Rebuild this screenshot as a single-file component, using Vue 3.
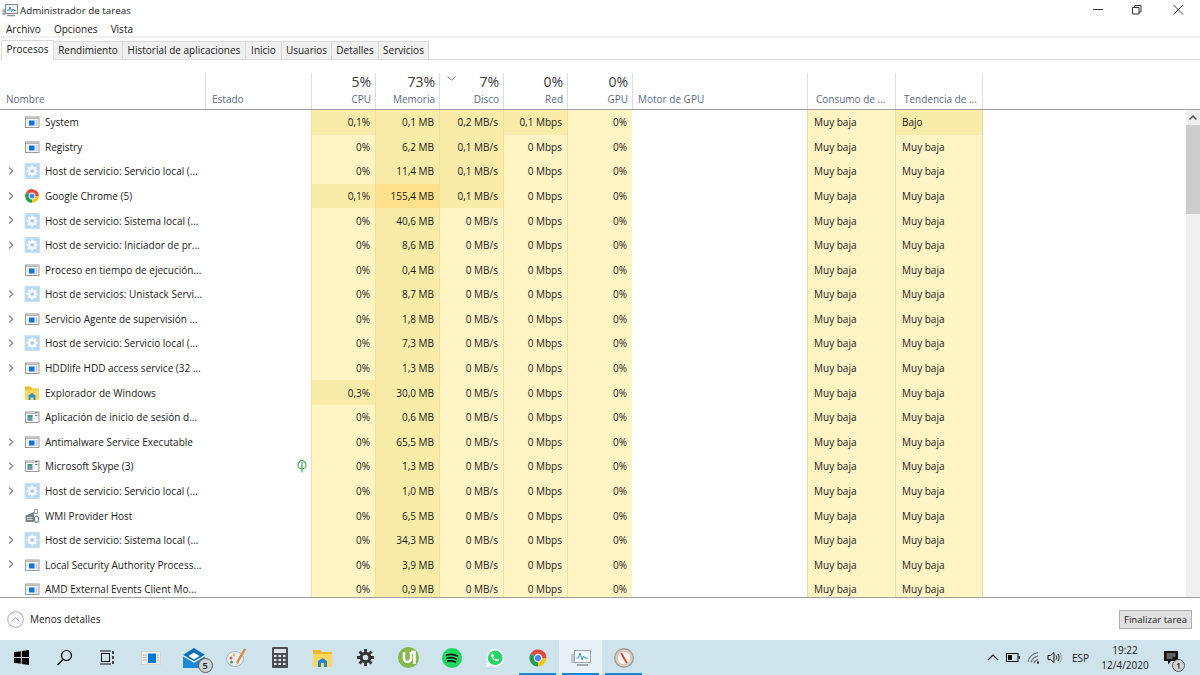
<script setup>
const tabs = [
  { label: 'Procesos', w: 53 },
  { label: 'Rendimiento', w: 69 },
  { label: 'Historial de aplicaciones', w: 123 },
  { label: 'Inicio', w: 36 },
  { label: 'Usuarios', w: 50 },
  { label: 'Detalles', w: 47 },
  { label: 'Servicios', w: 50 }
]

const H = 'Host de servicio: '
const rows = [
  ['System', 'win', 0, '0,1%', '0,1 MB', '0,2 MB/s', '0,1 Mbps'],
  ['Registry', 'win', 0, '0%', '6,2 MB', '0,1 MB/s', '0 Mbps'],
  [H + 'Servicio local (...', 'gear', 1, '0%', '11,4 MB', '0,1 MB/s', '0 Mbps'],
  ['Google Chrome (5)', 'chrome', 1, '0,1%', '155,4 MB', '0,1 MB/s', '0 Mbps'],
  [H + 'Sistema local (...', 'gear', 1, '0%', '40,6 MB', '0 MB/s', '0 Mbps'],
  [H + 'Iniciador de pr...', 'gear', 1, '0%', '8,6 MB', '0 MB/s', '0 Mbps'],
  ['Proceso en tiempo de ejecución...', 'win', 0, '0%', '0,4 MB', '0 MB/s', '0 Mbps'],
  ['Host de servicios: Unistack Servi...', 'gear', 1, '0%', '8,7 MB', '0 MB/s', '0 Mbps'],
  ['Servicio Agente de supervisión ...', 'win', 1, '0%', '1,8 MB', '0 MB/s', '0 Mbps'],
  [H + 'Servicio local (...', 'gear', 1, '0%', '7,3 MB', '0 MB/s', '0 Mbps'],
  ['HDDlife HDD access service (32 ...', 'win', 1, '0%', '1,3 MB', '0 MB/s', '0 Mbps'],
  ['Explorador de Windows', 'folder', 0, '0,3%', '30,0 MB', '0 MB/s', '0 Mbps'],
  ['Aplicación de inicio de sesión d...', 'app', 0, '0%', '0,6 MB', '0 MB/s', '0 Mbps'],
  ['Antimalware Service Executable', 'win', 1, '0%', '65,5 MB', '0 MB/s', '0 Mbps'],
  ['Microsoft Skype (3)', 'app', 1, '0%', '1,3 MB', '0 MB/s', '0 Mbps'],
  [H + 'Servicio local (...', 'gear', 1, '0%', '1,0 MB', '0 MB/s', '0 Mbps'],
  ['WMI Provider Host', 'wmi', 0, '0%', '6,5 MB', '0 MB/s', '0 Mbps'],
  [H + 'Sistema local (...', 'gear', 1, '0%', '34,3 MB', '0 MB/s', '0 Mbps'],
  ['Local Security Authority Process...', 'win', 1, '0%', '3,9 MB', '0 MB/s', '0 Mbps'],
  ['AMD External Events Client Mo...', 'win', 0, '0%', '0,9 MB', '0 MB/s', '0 Mbps']
].map(([name, icon, chev, cpu, mem, disk, net], i) => ({
  id: i, name, icon, chev, cpu, mem, disk, net,
  cpuHeat: cpu === '0%' ? 'h0' : 'h1',
  memHeat: parseFloat(mem) === 155 ? 'h2' : 'h1',
  diskHeat: disk === '0 MB/s' ? 'h0' : 'h1',
  netHeat: net === '0 Mbps' ? 'h0' : 'h1',
  trend: i === 0 ? 'Bajo' : 'Muy baja',
  trendHeat: i === 0 ? 'h1' : 'h0',
  leaf: name.startsWith('Microsoft Skype')
}))

const heads = [
  { pct: '', label: 'Estado', cls: 'left estado' },
  { pct: '5%', label: 'CPU' },
  { pct: '73%', label: 'Memoria' },
  { pct: '7%', label: 'Disco', sort: true },
  { pct: '0%', label: 'Red' },
  { pct: '0%', label: 'GPU' },
  { pct: '', label: 'Motor de GPU', cls: 'left motor' },
  { pct: '', label: 'Consumo de ...', cls: 'left power' },
  { pct: '', label: 'Tendencia de ...', cls: 'left power' }
]
</script>

<template>
  <div class="screen">
    <svg class="defs" width="0" height="0">
      <symbol id="i-win" viewBox="0 0 16 16">
        <rect x="1.500" y="3" width="13.500" height="10.500" fill="#f6f6f6" stroke="#9b9b9b"/>
        <rect x="2" y="3.500" width="12.500" height="1.500" fill="#b9b9b9"/>
        <rect x="5" y="6.500" width="5.500" height="5" fill="#0c74dc"/>
        <path d="M11.500 7h2M11.500 9h2M11.500 11h2" stroke="#a3adb6"/>
        <path d="M3 7h1M3 9h1" stroke="#cfd5da"/>
      </symbol>
      <symbol id="i-app" viewBox="0 0 16 16">
        <rect x="1.500" y="3" width="13.500" height="10.500" fill="#f6f6f6" stroke="#9b9b9b"/>
        <rect x="2" y="3.500" width="12.500" height="1.500" fill="#c4c4c4"/>
        <rect x="3.500" y="6" width="5" height="2.800" fill="#3d9a78"/>
        <rect x="3.500" y="8.800" width="5" height="3" fill="#6d90ab"/>
        <path d="M11 3.500h2.500M11 6.500h2.500" stroke="#777"/>
      </symbol>
      <symbol id="i-gear" viewBox="0 0 16 16">
        <rect x="1" y="0.500" width="14.500" height="15" fill="#b9d9f3" stroke="#c9e1f5"/>
        <circle cx="8.200" cy="8" r="3.100" fill="none" stroke="#fff" stroke-width="2.200"/>
        <path d="M8.200 2.400v2.200M8.200 11.400v2.200M2.600 8h2.200M11.600 8h2.200M4.300 4.100l1.500 1.500M10.600 10.400l1.500 1.500M12.100 4.100l-1.500 1.500M5.800 10.400l-1.500 1.500" stroke="#fff" stroke-width="2"/>
        <circle cx="8.200" cy="8" r="1.200" fill="#a3c9ea"/>
      </symbol>
      <symbol id="i-chrome" viewBox="0 0 16 16">
        <path d="M8 8 2.100 4.600A6.800 6.800 0 0 1 14.800 8Z" fill="#dd4b3e"/>
        <path d="M8 8 14.800 8A6.800 6.800 0 0 1 8 14.800Z" fill="#f5c518"/>
        <path d="M8 8 8 14.800A6.800 6.800 0 0 1 2.100 4.600Z" fill="#1e9e55"/>
        <circle cx="8" cy="8" r="3.400" fill="#fff"/>
        <circle cx="8" cy="8" r="2.500" fill="#4a86e8"/>
      </symbol>
      <symbol id="i-folder" viewBox="0 0 16 16">
        <path d="M1 1.500h5.500L8 3.500h7v11H1Z" fill="#eeb52f"/>
        <rect x="1" y="4.500" width="14" height="10" fill="#fbd75b"/>
        <path d="M4.500 15V10.500L8 8l3.500 2.500V15H9.500v-2.500h-3V15Z" fill="#2b8fd8"/>
      </symbol>
      <symbol id="i-wmi" viewBox="0 0 16 16">
        <path d="M1.500 7.500 10 4v10H1.500Z" fill="#7b8289"/>
        <path d="M3 9.500h5.500M3 11.500h5.500" stroke="#d9dde0"/>
        <rect x="10.500" y="1.500" width="3" height="4" fill="none" stroke="#9aa0a6"/>
        <rect x="10.500" y="8" width="4" height="6.500" rx="2" fill="#fff" stroke="#4b6f9a"/>
      </symbol>
    </svg>

    <header class="titlebar">
      <svg class="appicon" viewBox="0 0 16 16" width="16" height="16">
        <rect x="0.500" y="7" width="3" height="6" fill="#aab3b9"/>
        <rect x="3.500" y="2.500" width="12" height="9" fill="#eef3f7" stroke="#7f8a93"/>
        <path d="M5 8.500 7 8l1-3 1.500 4.500L11 7l1 1.500h2" fill="none" stroke="#3a8fd0"/>
        <path d="M5 13.500h8" stroke="#8d969d" stroke-width="1.500"/>
      </svg>
      <span class="title">Administrador de tareas</span>
      <div class="winctl">
        <svg width="46" height="20" viewBox="0 0 46 20"><path d="M21 9.500h10" stroke="#333"/></svg>
        <svg width="40" height="20" viewBox="0 0 40 20"><path d="M14.500 7.500h6.500v6.500h-6.500zM16.500 7.500v-2h6.500v6.500h-2" fill="none" stroke="#333"/></svg>
        <svg width="40" height="20" viewBox="0 0 40 20"><path d="M15.500 5l9.500 9.500M25 5l-9.500 9.500" stroke="#333"/></svg>
      </div>
    </header>

    <nav class="menu">
      <span>Archivo</span><span>Opciones</span><span>Vista</span>
    </nav>

    <div class="tabs">
      <div
        v-for="(t, i) in tabs"
        :key="t.label"
        class="tab"
        :class="{ active: i === 0 }"
        :style="{ width: t.w + 'px' }"
      >{{ t.label }}</div>
    </div>

    <div class="table">
      <div class="thead grid">
        <div class="th left name"><span class="lbl">Nombre</span></div>
        <div v-for="h in heads" :key="h.label" class="th" :class="h.cls">
          <svg v-if="h.sort" class="sort" width="9" height="5" viewBox="0 0 9 5"><path d="M0.500 0.500 4.500 4l4-3.500" fill="none" stroke="#6b7480"/></svg>
          <span class="pct">{{ h.pct }}</span>
          <span class="lbl">{{ h.label }}</span>
        </div>
      </div>

      <div class="tbody">
        <div class="rows">
          <div v-for="r in rows" :key="r.id" class="grid row">
            <div class="td namecell">
              <svg v-if="r.chev" class="chev" width="6" height="10" viewBox="0 0 6 10"><path d="M1.200 1.500 4.700 5 1.200 8.500" fill="none" stroke="#8a8a8a" stroke-width="1.300"/></svg>
              <svg class="ico" width="16" height="16"><use :href="'#i-' + r.icon"/></svg>
              <span class="ntext">{{ r.name }}</span>
            </div>
            <div class="td estadocell">
              <svg v-if="r.leaf" class="leaf" width="10" height="14" viewBox="0 0 10 14"><path d="M5 1C2 2.500 1 5 1 6.500 1 8.500 3 9.800 5 9.800s4-1.300 4-3.300C9 5 8 2.500 5 1ZM5 3v10.500" fill="none" stroke="#2fa84f" stroke-width="1.100"/></svg>
            </div>
            <div class="td num" :class="r.cpuHeat">{{ r.cpu }}</div>
            <div class="td num" :class="r.memHeat">{{ r.mem }}</div>
            <div class="td num" :class="r.diskHeat">{{ r.disk }}</div>
            <div class="td num" :class="r.netHeat">{{ r.net }}</div>
            <div class="td num h0">0%</div>
            <div class="td"></div>
            <div class="td txt h0">Muy baja</div>
            <div class="td txt" :class="r.trendHeat">{{ r.trend }}</div>
          </div>
        </div>
        <div class="scrollbar">
          <svg class="up" width="14" height="15" viewBox="0 0 14 15"><path d="M3.500 9.500 7 6l3.500 3.500" fill="none" stroke="#555" stroke-width="1.500"/></svg>
          <div class="thumb"></div>
        </div>
      </div>
    </div>

    <footer class="foot">
      <div class="less">
        <svg width="17" height="17" viewBox="0 0 17 17"><circle cx="8.500" cy="8.500" r="7.800" fill="none" stroke="#a8a8a8"/><path d="M4.800 10.200 8.500 6.500l3.700 3.700" fill="none" stroke="#a8a8a8"/></svg>
        <span>Menos detalles</span>
      </div>
      <button class="end">Finalizar tarea</button>
    </footer>

    <div class="taskbar">
      <div class="tb"><svg width="15" height="15" viewBox="0 0 15 15"><path d="M0 2.200 6.800 1.200V7H0ZM7.800 1 15 0v7H7.800ZM0 8h6.800v5.800L0 12.800ZM7.800 8H15v7l-7.200-1Z" fill="#000"/></svg></div>
      <div class="tb"><svg width="17" height="17" viewBox="0 0 17 17"><circle cx="10.500" cy="6.500" r="5" fill="none" stroke="#111" stroke-width="1.200"/><path d="M7 10.500 1.500 16" stroke="#111" stroke-width="1.500"/></svg></div>
      <div class="tb"><svg width="15" height="15" viewBox="0 0 15 15"><path d="M0 1h11M0 14h11" stroke="#111"/><rect x="1.500" y="3.500" width="8" height="8" fill="none" stroke="#111"/><path d="M13 1v3M13 6v3M13 11v3" stroke="#111" stroke-width="1.500"/></svg></div>
      <div class="tb"><svg width="20" height="14" viewBox="0 0 20 14"><rect width="20" height="14" fill="#d4d4d4"/><rect x="1" y="1" width="18" height="12" fill="#f0f0f0"/><rect x="7" y="2.500" width="8" height="9.500" fill="#0a78d7"/><path d="M2 4h4M2 6.500h4M2 9h4M16 4h2M16 6.500h2M16 9h2" stroke="#b3bcc4"/></svg></div>
      <div class="tb">
        <span class="badged">
          <svg width="22" height="20" viewBox="0 0 22 20"><path d="M0 7h22v13H0Z" fill="#1a8ad6"/><path d="M0 7 11 0l11 7-11 7Z" fill="#0b6eb9"/><path d="M5.500 8 11 4.500 16.500 8 11 11.500Z" fill="#fff"/><path d="M0 7.500 11 14 22 7.500" fill="none" stroke="#fff" stroke-width="1.200"/></svg>
          <span class="badge">5</span>
        </span>
      </div>
      <div class="tb"><svg width="22" height="22" viewBox="0 0 22 22"><ellipse cx="9" cy="12" rx="8.500" ry="7.500" fill="#e8eef5" stroke="#a8b4c0"/><circle cx="5" cy="11" r="1.500" fill="#e05a4a"/><circle cx="8" cy="8" r="1.500" fill="#f0c040"/><circle cx="5.500" cy="15" r="1.500" fill="#4a9a5a"/><path d="M19 2 11 16" stroke="#d98a3a" stroke-width="2.500"/><path d="M12 14l-2 4 3-2Z" fill="#d0a070"/></svg></div>
      <div class="tb"><svg width="16" height="21" viewBox="0 0 16 21"><rect width="16" height="21" rx="1" fill="#4a4f55"/><rect x="2" y="2" width="12" height="4" fill="#dfe3e6"/><g fill="#e6e6e6"><rect x="2" y="8" width="2.500" height="2"/><rect x="6.500" y="8" width="2.500" height="2"/><rect x="11" y="8" width="2.500" height="2"/><rect x="2" y="12" width="2.500" height="2"/><rect x="6.500" y="12" width="2.500" height="2"/><rect x="11" y="12" width="2.500" height="2"/><rect x="2" y="16" width="2.500" height="2"/><rect x="6.500" y="16" width="2.500" height="2"/><rect x="11" y="16" width="2.500" height="2"/></g></svg></div>
      <div class="tb"><svg width="19" height="18" viewBox="0 0 19 18"><path d="M0 1h7l2 2h10v15H0Z" fill="#eeb52f"/><rect y="5" width="19" height="13" fill="#fbd862"/><path d="M5 18v-6l4.500-3L14 12v6h-3v-4H8v4Z" fill="#1f86cf"/></svg></div>
      <div class="tb"><svg width="17" height="17" viewBox="0 0 17 17"><circle cx="8.500" cy="8.500" r="4.300" fill="none" stroke="#333" stroke-width="3"/><path d="M8.500 0v3.500M8.500 13.500V17M0 8.500h3.500M13.500 8.500H17M2.500 2.500 5 5M12 12l2.500 2.500M14.500 2.500 12 5M5 12l-2.500 2.500" stroke="#333" stroke-width="2.800"/></svg></div>
      <div class="tb"><svg width="21" height="21" viewBox="0 0 21 21"><circle cx="10.500" cy="10.500" r="10.500" fill="#84b84c"/><path d="M6 5v6.500a3.500 3.500 0 0 0 7 0V5M13 5h3.500v12" fill="none" stroke="#fff" stroke-width="2.500"/></svg></div>
      <div class="tb"><svg width="20" height="20" viewBox="0 0 20 20"><circle cx="10" cy="10" r="10" fill="#1ed760"/><path d="M4.500 7C8 6 12.500 6.200 15.500 8M5 10.200c3-.8 7-.6 9.500 1M5.800 13.200c2.500-.6 5.500-.4 7.500.8" fill="none" stroke="#1a1a1a" stroke-width="1.700" stroke-linecap="round"/></svg></div>
      <div class="tb"><svg width="20" height="20" viewBox="0 0 20 20"><path d="M1 19l1.500-5A8.800 8.800 0 1 1 6 17.600Z" fill="#fff"/><circle cx="10.200" cy="9.800" r="7.300" fill="#25d366"/><path d="M7 5.800c-1.200 1-1 2.500.2 4.200s3 3 4.600 3.300c1.200.2 2-.6 2.200-1.500l-2-1.100-.9 1c-1.300-.4-2.500-1.600-3-3l.9-.9L8 5.700Z" fill="#fff"/></svg></div>
      <div class="tb"><svg width="20" height="20"><use href="#i-chrome"/></svg><i class="run"></i></div>
      <div class="tb current"><svg width="20" height="20" viewBox="0 0 20 20"><rect x="0" y="6" width="4" height="9" fill="#c2c9ce"/><rect x="3.500" y="2.500" width="16" height="12" fill="#f3f6f8" stroke="#9aa4ac"/><path d="M5.500 10h2l1.500-5 2 7 1.500-4 1.500 2h3" fill="none" stroke="#4b9ad6"/><path d="M6 17h11" stroke="#a3abb1" stroke-width="2"/></svg><i class="run"></i></div>
      <div class="tb"><svg width="20" height="20" viewBox="0 0 20 20"><circle cx="10" cy="10" r="9.300" fill="#d8d0c4" stroke="#a89e90" stroke-width="1.400"/><circle cx="10" cy="10" r="6.800" fill="#f7f5f0" stroke="#cfc8bc"/><path d="M7 5l6 10" stroke="#d9412f" stroke-width="1.800"/></svg><i class="run"></i></div>

      <div class="tray">
        <svg class="t-chev" width="12" height="7" viewBox="0 0 12 7"><path d="M1 6l5-5 5 5" fill="none" stroke="#111" stroke-width="1.100"/></svg>
        <svg class="t-bat" width="14" height="9" viewBox="0 0 14 9"><rect x="0.500" y="0.500" width="11.500" height="8" fill="none" stroke="#111"/><rect x="2" y="2" width="4" height="5" fill="#111"/><rect x="12.500" y="3" width="1.500" height="3" fill="#111"/></svg>
        <svg class="t-wifi" width="15" height="13" viewBox="0 0 15 13"><path d="M1 11C2 6 6 2.500 11 1.500M4 11.500c.7-3 3-5.500 7-6.500M7 12c.4-1.600 1.500-2.800 4-3.500" fill="none" stroke="#666" stroke-width="1.100"/><rect x="10" y="10.500" width="2" height="2" fill="#111"/></svg>
        <svg class="t-vol" width="15" height="13" viewBox="0 0 15 13"><path d="M1 4.500h2.500L7 1.500v10L3.500 8.500H1Z" fill="none" stroke="#111"/><path d="M9 4.500c.8 1.200.8 2.800 0 4M11 3c1.300 2 1.300 5 0 7" fill="none" stroke="#111"/><path d="M13 1.500c1.800 3 1.800 7 0 10" fill="none" stroke="#999"/></svg>
        <span class="t-lang">ESP</span>
        <div class="t-clock"><span>19:22</span><span>12/4/2020</span></div>
        <span class="badged t-note">
          <svg width="14" height="14" viewBox="0 0 14 14"><path d="M0 0h14v10H7l-3 3.500V10H0Z" fill="#111"/><path d="M2.500 3h9M2.500 5h9M2.500 7h6" stroke="#cfe2ec" stroke-width="0.800"/></svg>
          <span class="badge small">1</span>
        </span>
      </div>
    </div>
  </div>
</template>

<style>
html, body { margin: 0; padding: 0; background: #fff; }
</style>

<style scoped>
.screen {
  width: 1200px;
  height: 675px;
  display: flex;
  flex-direction: column;
  overflow: hidden;
  background: #fff;
  color: #1a1a1a;
  font-family: "Open Sans", "Noto Sans", sans-serif;
  font-size: 10px;
}
.defs { position: absolute; }
.titlebar {
  height: 20px;
  display: flex;
  align-items: center;
  padding-left: 2px;
  flex: none;
}
.appicon { margin-right: 2px; }
.title { font-size: 9.800px; }
.winctl { margin-left: auto; display: flex; margin-right: 2px; }
.menu {
  height: 15px;
  padding-top: 1px;
  display: flex;
  align-items: center;
  flex: none;
  gap: 13px;
  padding-left: 6px;
  border-bottom: 2px solid #f0f0f0;
}
.tabs {
  height: 21px;
  flex: none;
  display: flex;
  align-items: flex-end;
  padding-left: 1px;
  border-bottom: 1px solid #d9d9d9;
  box-sizing: content-box;
}
.tab {
  height: 18px;
  line-height: 17px;
  flex: none;
  box-sizing: border-box;
  text-align: center;
  background: #f0f0f0;
  border: 1px solid #d9d9d9;
  border-width: 1px 1px 0 0;
}
.tab.active {
  height: 20px;
  line-height: 17px;
  margin-bottom: -1px;
  background: #fff;
  border-left: 1px solid #d9d9d9;
  padding-bottom: 3px;
}
.table {
  flex: none;
  padding-top: 13px;
  box-sizing: border-box;
  height: 538px;
  border-bottom: 1px solid #a0a0a0;
  display: flex;
  flex-direction: column;
}
.grid {
  display: grid;
  grid-template-columns: 205px 106px repeat(4, 64px) 65px 175px 88px 88px;
}
.thead {
  height: 37px;
  flex: none;
  border-bottom: 1px solid #a0a0a0;
  box-sizing: border-box;
}
.th {
  border-left: 1px solid #dcdcdc;
  box-sizing: border-box;
  display: flex;
  flex-direction: column;
  align-items: flex-end;
  justify-content: flex-end;
  padding: 0 4px 3px 0;
  position: relative;
}
.th:last-child { border-right: 1px solid #dcdcdc; }
.th.left { align-items: flex-start; padding: 0 0 3px 5px; }
.th.name { border-left: 0; padding-left: 6px; }
.th.estado { padding-left: 6px; }
.th.power { padding-left: 8px; }
.pct { font-size: 14px; line-height: 15px; color: #3a3a3a; }
.lbl { font-size: 10px; line-height: 14px; margin-top: 3px; color: #5c6b82; white-space: nowrap; }
.sort { position: absolute; left: 7px; top: 3px; }
.tbody { flex: 1; min-height: 0; display: flex; overflow: hidden; }
.rows { flex: 1; min-width: 0; }
.row { height: 24.580px; }
.td {
  display: flex;
  align-items: center;
  height: 100%;
  overflow: hidden;
  white-space: nowrap;
  box-sizing: border-box;
}
.num {
  justify-content: flex-end;
  padding-right: 5px;
  border-left: 1px solid #f2dfa0;
}
.txt { padding-left: 6px; border-left: 1px solid #f2d9a0; }
.txt:last-child { border-right: 1px solid #f2d9a0; }
.h0 { background: #fff4c4; }
.h1 { background: #f9eca8; }
.h2 { background: #fde08a; }
.namecell { position: relative; padding-left: 24px; }
.chev { position: absolute; left: 8px; top: 7px; }
.ico { flex: none; margin-right: 5px; }
.estadocell { justify-content: flex-end; padding-right: 4px; }
.scrollbar {
  width: 14px;
  flex: none;
  background: #f0f0f0;
  margin-left: auto;
}
.up { display: block; background: #f0f0f0; }
.thumb { height: 89px; background: #cdcdcd; }
.foot {
  flex: 1;
  display: flex;
  align-items: center;
  justify-content: space-between;
  padding: 0 8px 0 7px;
}
.less { display: flex; align-items: center; gap: 6px; }
.end {
  width: 73px;
  height: 19px;
  padding: 0;
  font: inherit;
  font-size: 9.600px;
  color: inherit;
  background: #e1e1e1;
  border: 1px solid #adadad;
  white-space: nowrap;
}
.taskbar {
  height: 35px;
  flex: none;
  display: flex;
  align-items: stretch;
  background: #cfe3ec;
}
.tb {
  width: 43px;
  flex: none;
  display: flex;
  align-items: center;
  justify-content: center;
  position: relative;
}
.tb.current { background: #e8f1f6; }
.run {
  position: absolute;
  left: 3px;
  right: 3px;
  bottom: 0;
  height: 2px;
  background: #1688d8;
}
.badged { position: relative; display: flex; }
.badge {
  position: absolute;
  right: -8px;
  bottom: -5px;
  width: 13px;
  height: 13px;
  border-radius: 50%;
  background: #d0d3d6;
  border: 1px solid #555;
  color: #111;
  font-size: 9px;
  font-weight: 600;
  line-height: 13px;
  text-align: center;
  box-sizing: content-box;
}
.tray {
  margin-left: auto;
  display: flex;
  align-items: center;
}
.t-chev { margin-right: 7px; }
.t-bat { margin-right: 7px; }
.t-wifi { margin-right: 5px; }
.t-vol { margin-right: 10px; }
.t-lang { font-size: 10px; width: 22px; margin-right: 5px; }
.t-clock {
  width: 52px;
  display: flex;
  flex-direction: column;
  align-items: center;
  font-size: 10px;
  line-height: 15px;
  margin-right: 13px;
}
.t-note { margin-right: 22px; }
.badge.small { right: -7px; bottom: -7px; width: 11px; height: 11px; line-height: 11px; font-size: 8px; }
</style>
